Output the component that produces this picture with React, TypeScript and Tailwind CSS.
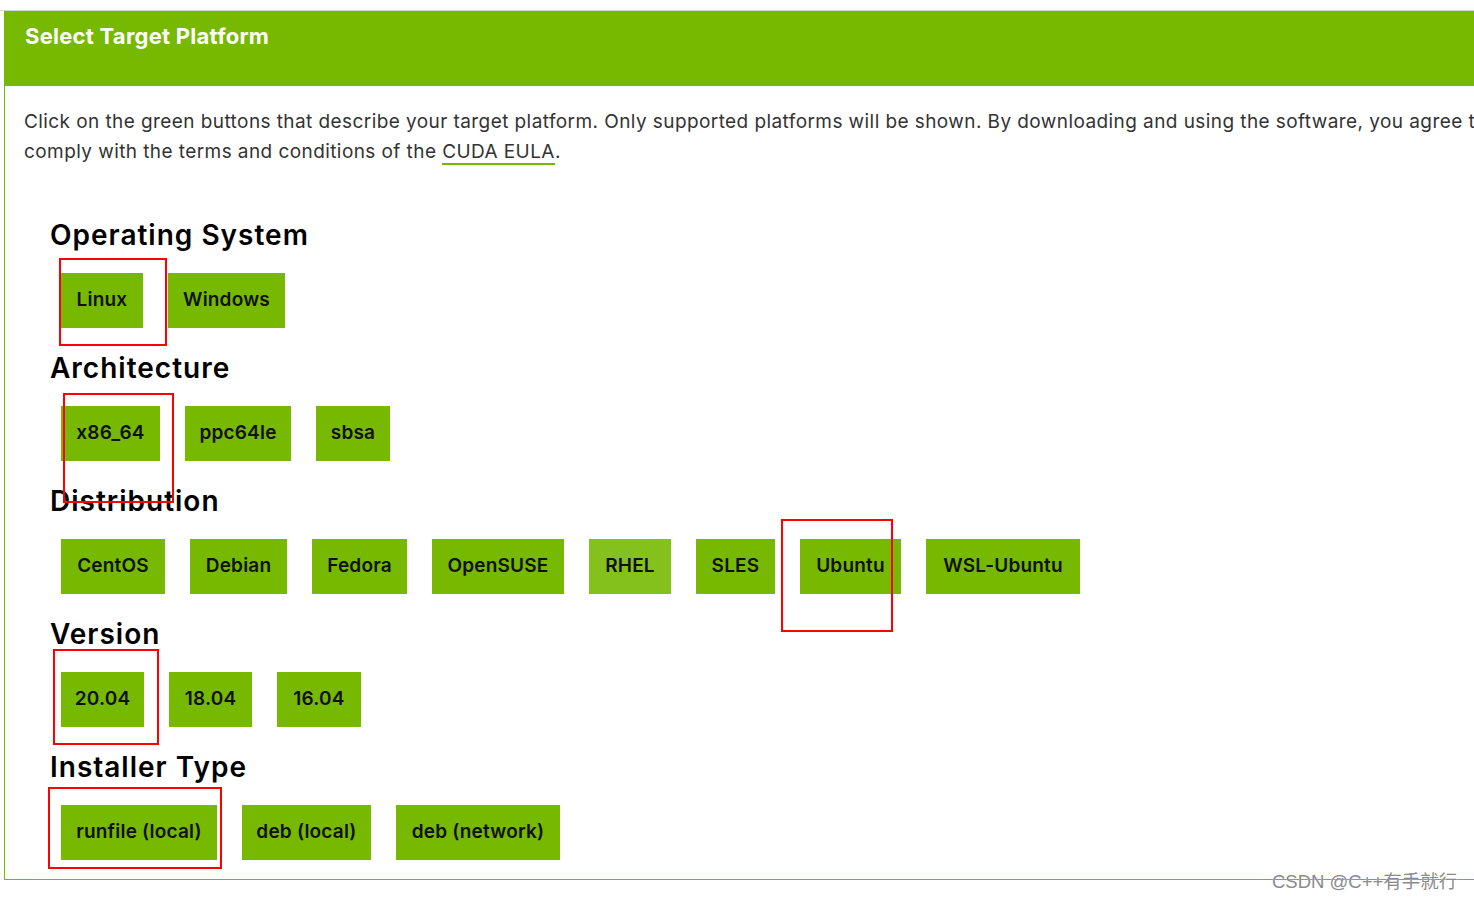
import React from 'react';

type Option = { label: string; width: number; hover?: boolean };
type Section = { title: string; options: Option[] };

const sections: Section[] = [
  {
    title: 'Operating System',
    options: [
      { label: 'Linux', width: 82 },
      { label: 'Windows', width: 117 },
    ],
  },
  {
    title: 'Architecture',
    options: [
      { label: 'x86_64', width: 99 },
      { label: 'ppc64le', width: 106 },
      { label: 'sbsa', width: 74 },
    ],
  },
  {
    title: 'Distribution',
    options: [
      { label: 'CentOS', width: 104 },
      { label: 'Debian', width: 97 },
      { label: 'Fedora', width: 95 },
      { label: 'OpenSUSE', width: 132 },
      { label: 'RHEL', width: 82, hover: true },
      { label: 'SLES', width: 79 },
      { label: 'Ubuntu', width: 101 },
      { label: 'WSL-Ubuntu', width: 154 },
    ],
  },
  {
    title: 'Version',
    options: [
      { label: '20.04', width: 83 },
      { label: '18.04', width: 83 },
      { label: '16.04', width: 84 },
    ],
  },
  {
    title: 'Installer Type',
    options: [
      { label: 'runfile (local)', width: 156 },
      { label: 'deb (local)', width: 129 },
      { label: 'deb (network)', width: 164 },
    ],
  },
];

// red annotation boxes drawn over the screenshot
const marks = [
  { left: 59, top: 258, width: 108, height: 88 },
  { left: 63, top: 393, width: 111, height: 110 },
  { left: 781, top: 519, width: 112, height: 113 },
  { left: 53, top: 649, width: 106, height: 96 },
  { left: 48, top: 787, width: 174, height: 82 },
];

function OptionButton({ option }: { option: Option }) {
  return (
    <button
      type="button"
      style={{ width: option.width }}
      className={`flex h-[55px] items-center justify-center text-[19px] font-semibold tracking-[0.2px] text-[#111] ${
        option.hover ? 'bg-[#84c11d]' : 'bg-[#76b900]'
      }`}
    >
      {option.label}
    </button>
  );
}

export default function App() {
  return (
    <div
      className="relative h-[900px] w-full overflow-hidden bg-white"
      style={{ fontFamily: 'Inter, "Noto Sans", sans-serif' }}
    >
      <div className="mt-[10px] border-t border-[#d6d6d6]">
        <div className="ml-[4px] w-[1520px] border-b border-l border-[#76b900]">
          <div className="h-[75px] bg-[#76b900] px-5 pt-[11px]">
            <h2 className="text-[22px] font-bold leading-[28px] tracking-[0.25px] text-white">Select Target Platform</h2>
          </div>

          <div className="pb-[19px] pl-[19px]">
            <p className="w-[1480px] pt-[21px] text-[19px] leading-[30px] tracking-[0.42px] text-[#333]">
              Click on the green buttons that describe your target platform. Only supported platforms will be shown. By
              downloading and using the software, you agree to comply with the terms and conditions of the{' '}
              <span className="border-b-2 border-[#76b900]">CUDA EULA</span>.
            </p>

            <div className="mt-[50px] flex flex-col gap-[22px] pl-[26px]">
              {sections.map((section) => (
                <div key={section.title} className="flex flex-col gap-[20px]">
                  <h3 className="text-[28px] font-semibold leading-[36px] tracking-[1px] text-black">{section.title}</h3>
                  <div className="flex gap-[25px] pl-[11px]">
                    {section.options.map((option) => (
                      <OptionButton key={option.label} option={option} />
                    ))}
                  </div>
                </div>
              ))}
            </div>
          </div>
        </div>
      </div>

      {marks.map((m, i) => (
        <div
          key={i}
          className="pointer-events-none absolute border-2 border-[#ff0000]"
          style={{ left: m.left, top: m.top, width: m.width, height: m.height }}
        />
      ))}

      <div
        className="absolute left-[1272px] top-[868px] text-[18.5px] text-[#8a8a8a] [text-shadow:0_0_1px_#ffffff]"
        style={{ fontFamily: '"Liberation Sans", "Noto Sans CJK SC", sans-serif' }}
      >
        CSDN @C++有手就行
      </div>
    </div>
  );
}
